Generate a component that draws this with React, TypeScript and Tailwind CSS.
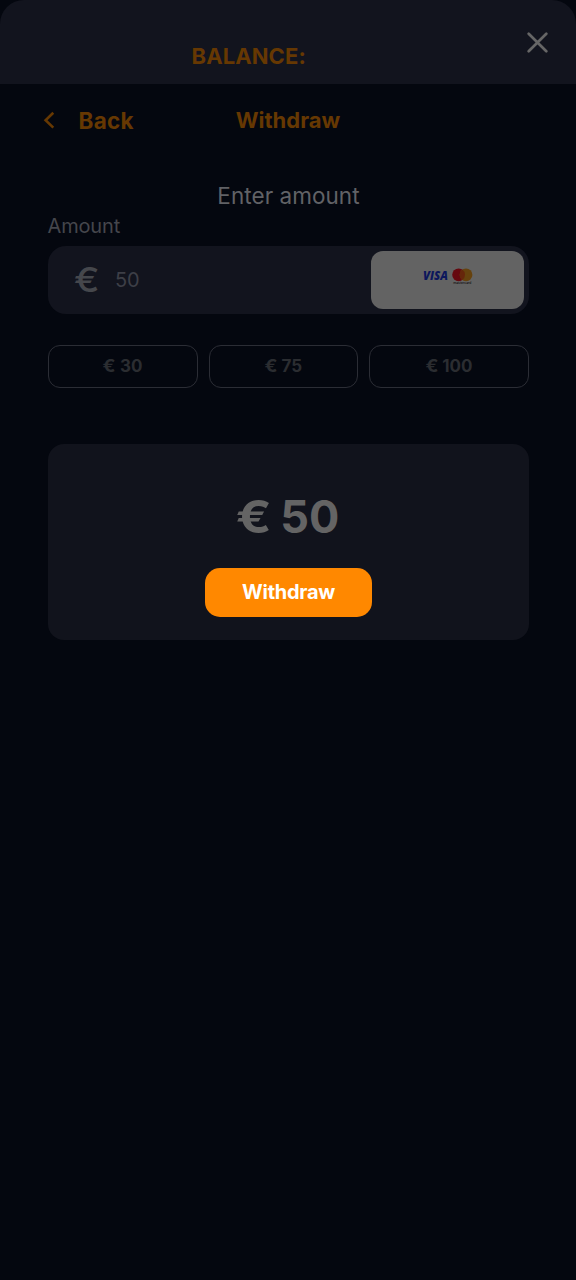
import React from "react";

type AmountProps = {
  value: number;
  className: string;
};

const AmountOption = ({ value, className }: AmountProps) => {
  return (
    <button
      className={`h-[43px] rounded-[12px] border border-[#2b2d35] pl-px text-[17px] leading-[41px] font-bold text-[#2b2d31] ${className}`}
    >
      <span className="inline-block origin-right scale-x-[1.12]">€</span> {value}
    </button>
  );
};

const CardLogos = () => {
  return (
    <svg width="50" height="18" viewBox="0 0 50 18" className="mb-[7px]">
      <text
        x="0"
        y="12.4"
        textLength="25"
        lengthAdjust="spacingAndGlyphs"
        fontFamily="Open Sans, sans-serif"
        fontSize="11.8"
        fontStyle="italic"
        fontWeight="800"
        fill="#0c175c"
      >
        VISA
      </text>
      <circle cx="35.6" cy="6.8" r="6.4" fill="#66080f" />
      <circle cx="43" cy="6.8" r="6.4" fill="#66420d" />
      <path d="M39.3 1.58a6.4 6.4 0 0 1 0 10.44a6.4 6.4 0 0 1 0-10.44z" fill="#66260b" />
      <text
        x="30.3"
        y="16.2"
        textLength="18"
        lengthAdjust="spacingAndGlyphs"
        fontFamily="Inter, sans-serif"
        fontSize="3.4"
        fontWeight="600"
        fill="#1c1c1c"
      >
        mastercard
      </text>
    </svg>
  );
};

export default function App() {
  return (
    <div className="flex h-[1280px] w-full flex-col bg-[#04070f] font-['Inter',sans-serif]">
      {/* balance bar */}
      <header className="flex h-[84px] justify-between rounded-t-[24px] bg-[#12141e] pl-[191.5px] pr-[28.5px]">
        <h1 className="pt-[42px] text-[22px] leading-[28px] font-bold tracking-[0.1px] text-[#663802]">
          BALANCE:
        </h1>
        <button aria-label="Close" className="mt-[32px] h-[21px] w-[21px]">
          <svg width="21" height="21" viewBox="0 0 21 21">
            <path
              d="M1.7 1.7L19.3 19.3M19.3 1.7L1.7 19.3"
              stroke="#666666"
              strokeWidth="2.7"
              strokeLinecap="round"
            />
          </svg>
        </button>
      </header>

      {/* navigation */}
      <nav className="grid h-[72px] grid-cols-3 items-center pl-[43px] pr-[43px] text-[22px] leading-[28px] font-bold text-[#663802]">
        <button className="flex items-center">
          <svg width="12" height="18" viewBox="0 0 12 18" fill="none">
            <path d="M10.3 1.8L2.6 9.2L10.3 16.6" stroke="#663802" strokeWidth="2.6" />
          </svg>
          <span className="ml-[23.5px] pt-px text-[22.5px] tracking-[0.25px]">Back</span>
        </button>
        <h2 className="text-center">Withdraw</h2>
      </nav>

      <main className="flex flex-col pl-[48px] pr-[47px]">
        <h3 className="mt-[26px] text-center text-[22.5px] leading-[28px] tracking-[0.05px] text-[#616266]">
          Enter amount
        </h3>
        <label className="mt-[4px] -ml-[0.5px] text-[20px] leading-[24px] tracking-[-0.15px] text-[#45464c]">
          Amount
        </label>
        <div className="mt-[8px] flex h-[68px] items-center rounded-[18px] bg-[#12141e] pl-[26px] pr-[5px]">
          <span className="origin-left scale-x-[1.12] text-[34px] leading-[40px] font-medium text-[#45474c]">
            €
          </span>
          <span className="ml-[18px] text-[20px] leading-[24px] text-[#3d3f47]">50</span>
          <div className="ml-auto flex h-[58px] w-[153px] items-center justify-center rounded-[12px] bg-[#636363]">
            <CardLogos />
          </div>
        </div>

        <div className="mt-[31px] flex justify-between">
          <AmountOption value={30} className="w-[150px]" />
          <AmountOption value={75} className="w-[149px]" />
          <AmountOption value={100} className="w-[160px]" />
        </div>

        {/* summary */}
        <section className="mt-[56px] flex h-[196px] flex-col items-center rounded-[16px] bg-[#11131c]">
          <p className="mt-[45px] ml-[3px] text-[45px] leading-[56px] font-bold text-[#646464]">
            <span className="mr-[-2px] inline-block origin-right scale-x-[1.17]">€</span> 50
          </p>
          <button className="mt-[23px] h-[49px] w-[167px] rounded-[15px] bg-[#ff8800] text-[20px] leading-[49px] font-bold tracking-[-0.25px] text-white">
            Withdraw
          </button>
        </section>
      </main>
    </div>
  );
}
